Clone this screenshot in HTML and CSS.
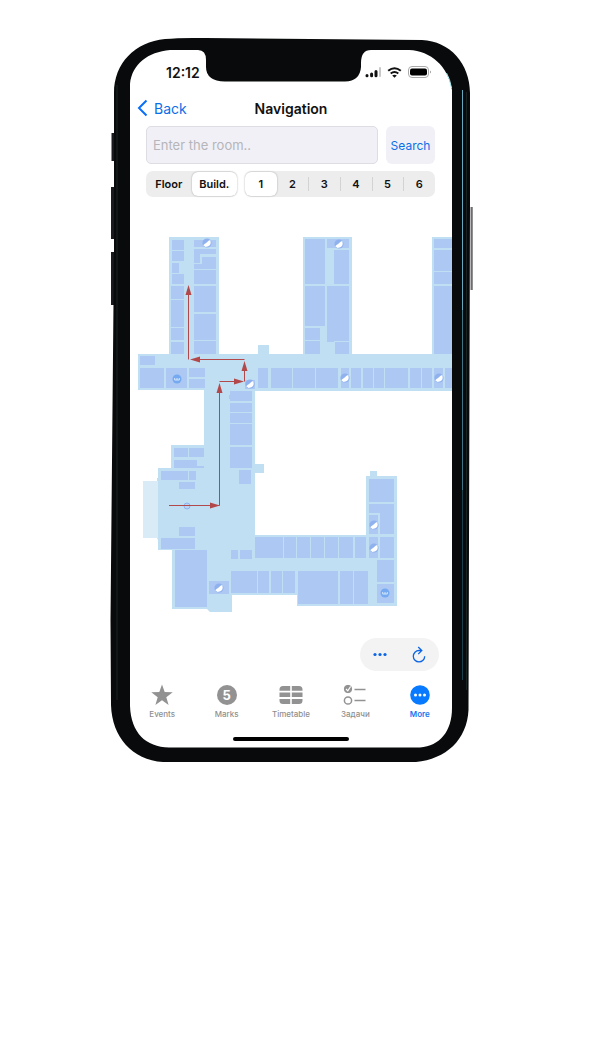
FILE: index.html
```html
<!DOCTYPE html>
<html lang="en">
<head>
<meta charset="utf-8">
<meta name="viewport" content="width=device-width, initial-scale=1">
<title>Navigation</title>
<link rel="stylesheet" href="styles.css">
</head>
<body>
<main class="phone">
  <div class="screen">
    <header>
      <div class="status">
        <time>12:12</time>
        <svg class="status-icons" width="66" height="14" viewBox="365 65 66 14" aria-hidden="true">
          <g stroke-linecap="round" stroke-width="3" stroke="#111"><path d="M367 75.5v.3M371.600 74v1.800M376 71.500v4.300"/><path d="M380 68v8" stroke="#c8c8c8" stroke-width="2"/></g>
          <g fill="none" stroke="#111" stroke-width="2"><path d="M388.200 70.800q6.300-5.200 12.600 0M390.700 73.500q3.800-3 7.600 0"/></g><path d="M392.200 75.500q2.300-1.700 4.600 0l-2.300 2.300z" fill="#111"/>
          <rect x="408.500" y="66.500" width="20" height="11" rx="3.500" fill="#fff" stroke="#aaa"/><rect x="410" y="68.500" width="17" height="7" rx="2" fill="#000"/><path d="M430 70.500q2 1.500 0 3z" fill="#999"/>
        </svg>
      </div>
      <nav class="navbar">
        <a class="back" href="#"><svg width="12" height="18" viewBox="0 0 12 18" aria-hidden="true"><path d="M9.500 1.500 2 9l7.500 7.500" fill="none" stroke="#0a6ff5" stroke-width="2"/></svg>Back</a>
        <h1>Navigation</h1>
      </nav>
    </header>
    <form class="search">
      <input type="text" aria-label="Room" placeholder="Enter the room..">
      <button type="button">Search</button>
    </form>
    <div class="filters">
      <div class="segments modes"><button type="button">Floor</button><button type="button" class="selected">Build.</button></div>
      <div class="segments levels"><button type="button" class="selected">1</button><button type="button">2</button><button type="button">3</button><button type="button">4</button><button type="button">5</button><button type="button">6</button></div>
    </div>
    <svg class="map" viewBox="130 205 322 425" role="img" aria-label="Building plan with route">
      <defs>
        <g id="stairs"><circle r="4.600" fill="#8fb2ef"/><path d="M3.300-3Q5.200 3.500-1.500 3.900L-3.700 2.200-2.500 1-1.300.3 0-.7 1-1.700 2-2.500z" fill="#fff"/></g>
        <g id="wc"><circle r="4.500" fill="#75aaf0"/><path d="M-2.300-1v2h4.600v-2M0-1v2" fill="none" stroke="#d5e7fb" stroke-width="1"/></g>
        <path id="head" d="M0 0l-10-3v6z"/>
      </defs>
      <path fill="#d9ebf6" d="M143 481h17v57h-17z"/>
      <path fill="#c1dff2" d="M138 354h31V237h50v117h39v-9h11v9h34V237h49v117h80V237h20v154H255v73h9v9h-9v62h111v-59h4v-5h7v5h20v130H297v-11h-65v17h-22l-3-3h-35v-59h-14v-10l-1-2h1v-57h-1v-3h1v-10h13v-23h33v-55h-66z"/>
      <g fill="#adc8f3">
        <path d="M172 240h12v10h-12zM172 251h12v10h-12zM172 263h7v10h-7zM172 274h12v10h-12zM171 286h13v13h-13zM171 300h13v27h-13zM171 328h13v12h-13zM171 342h13v12h-13zM194 240h22v7h-22zM194 249h22v5h-16v9h-6zM202 257h14v12h-22v-5h8zM194 270h22v14h-22zM194 286h22v26h-22zM194 314h22v26h-22zM194 341h22v13h-22z"/>
        <path d="M140 356h15v9h-15zM140 368h24v20h-24zM166 368h21v20h-21zM189 368h16v9h-16zM189 379h16v9h-16zM245 380h10v9h-10z"/>
        <path d="M305 239h20v45h-20zM327 239h22v9h-22zM334 250h15v34h-15zM305 286h20v40h-20zM327 286h22v55h-15v1h-7zM305 328h15v12h-15zM305 341h15v13h-15zM335 342h14v12h-14z"/>
        <path d="M434 239h18v9h-18zM434 250h18v21h-18zM434 272h18v12h-18zM434 286h18v68h-18z"/>
        <path d="M258 368h10v20h-10zM271 368h21v20h-21zM293 368h22v20h-22zM316 368h22v20h-22zM341 368h8v20h-8zM351 368h10v20h-10zM363 368h10v20h-10zM374 368h10v20h-10zM385 368h23v20h-23zM410 368h11v20h-11zM422 368h10v20h-10zM434 368h9v20h-9zM445 368h7v20h-7z"/>
        <path d="M230 391h22v10h-22v-2h-1v-4h1zM230 403h22v9h-22zM230 413h22v10h-22zM230 424h22v21h-22zM230 447h22v21h-22zM239 470h12v14h-12zM174 448h14v9h-14zM189 448h15v9h-15zM174 460h23v6h7v2h-30zM161 471h27v9h-27zM189 471h7v9h-7zM179 482h16v7h-16zM179 527h16v9h-16zM161 538h34v11h-34zM175 550h32v57h-32zM209 581h20v13h-20zM231 550h7v9h-7zM240 550h12v9h-12z"/>
        <path d="M255 537h28v21h-28zM284 537h12v21h-12zM297 537h13v21h-13zM311 537h13v21h-13zM325 537h13v21h-13zM339 537h14v21h-14zM355 537h11v21h-11zM369 479h25v23h-25zM369 504h25v30h-14v-21h-11zM369 515h9v19h-9zM369 537h9v21h-9zM380 537h14v21h-14zM377 560h17v22h-17zM377 584h17v19h-17zM231 571h26v22h-26zM258 571h11v22h-11zM271 571h11v22h-11zM283 571h12v22h-12zM298 571h40v33h-40zM340 571h13v33h-13zM354 571h14v33h-14z"/>
      </g>
      <use href="#stairs" x="207" y="243"/><use href="#stairs" x="339" y="244"/><use href="#stairs" x="250" y="384"/><use href="#stairs" x="345" y="378"/><use href="#stairs" x="439" y="378"/><use href="#stairs" x="219" y="588"/><use href="#stairs" x="374" y="525"/><use href="#stairs" x="374" y="548"/>
      <use href="#wc" x="177" y="379"/><use href="#wc" x="385" y="593"/>
      <circle cx="187" cy="506" r="3" fill="#b9d4f5" stroke="#8db3ee"/>
      <path d="M169 505.500h50.500V390M219.500 381.500H237M244.500 381.500V370M244.500 359.500H197M188.500 359.500V292" fill="none" stroke="#b3484a"/>
      <g fill="#b3484a"><use href="#head" transform="translate(220 505.500)"/><use href="#head" transform="translate(219.500 383) rotate(-90)"/><use href="#head" transform="translate(244 381.500)"/><use href="#head" transform="translate(244.500 361) rotate(-90)"/><use href="#head" transform="translate(190 359.500) rotate(180)"/><use href="#head" transform="translate(188.500 285) rotate(-90)"/></g>
    </svg>
    <div class="tools">
      <button type="button" aria-label="Options"><svg width="16" height="16" viewBox="0 0 16 16" fill="#0c66e4"><circle cx="3" cy="7.500" r="1.600"/><circle cx="8" cy="7.500" r="1.600"/><circle cx="13" cy="7.500" r="1.600"/></svg></button>
      <button type="button" aria-label="Reload"><svg width="16" height="18" viewBox="0 0 16 18" fill="none" stroke="#0c66e4" stroke-width="1.300"><path d="M10.500 4.500H8a5.700 5.700 0 1 0 5.700 5.700M7.200 1l3.600 3.500-3.600 3.600"/></svg></button>
    </div>
    <nav class="tabs">
      <a href="#"><svg width="24" height="22" viewBox="0 0 24 22" fill="#929292" aria-hidden="true"><path d="M12 .5l2.700 7.600 8 .2-6.400 4.900 2.300 7.700L12 16.300l-6.600 4.600 2.300-7.700L1.300 8.300l8-.2z"/></svg>Events</a>
      <a href="#"><span class="grade"><b>5</b></span>Marks</a>
      <a href="#"><svg width="24" height="22" viewBox="0 0 24 22" fill="#929292" aria-hidden="true"><path d="M4 2h7.200v4.700H.5V5.500Q.5 2 4 2zM12.800 2H20q3.500 0 3.500 3.500V6.700H12.800zM.5 8.500h10.700v4.500H.5zM12.800 8.500h10.700v4.500H12.800zM.5 15h10.700v5H4q-3.500 0-3.500-3.500zM12.800 15h10.700v1.500Q23.500 20 20 20h-7.200z"/></svg>Timetable</a>
      <a href="#"><svg width="24" height="22" viewBox="0 0 24 22" fill="none" stroke="#929292" aria-hidden="true"><circle cx="5" cy="5" r="3.700" fill="#929292"/><path d="M3 5l1.800 1.800L7.600 2.500" stroke="#fff" stroke-width="1.200"/><circle cx="5" cy="16.500" r="3.600" stroke-width="1.500"/><path d="M11.500 5.500H22.500M11.500 16.500H22.500" stroke-width="1.500"/></svg>Задачи</a>
      <a href="#" class="active" aria-current="page"><svg width="24" height="22" viewBox="0 0 24 22" aria-hidden="true"><circle cx="12" cy="11" r="9.800" fill="#087aff"/><g fill="#fff"><circle cx="7.500" cy="11" r="1.500"/><circle cx="12" cy="11" r="1.500"/><circle cx="16.500" cy="11" r="1.500"/></g></svg>More</a>
    </nav>
    <div class="home"></div>
  </div>
  <svg class="frame" viewBox="110 37 364 726" preserveAspectRatio="none" aria-hidden="true">
    <path d="M470 207h2v83h-2z" fill="#b9b7ba"/><path d="M472 207v83" stroke="#222"/>
    <path d="M114 133h-2.500v28h2.500zM114 187h-3v52h3zM114 252h-3v53h3z" fill="#181a1d"/>
    <path fill="#090a0b" fill-rule="evenodd" d="M165 39Q180 37.500 205 38L422 40C450 41 470 64 470 93V207L468.500 710C467 740 446 759 416 762H163C132 760 112 737 111 705L110.500 620 114 250V93C114 63 135 42 165 39ZM170 50C148 52 132 64 130 84V706C131 733 146 747 169 747.500H420C440 746 452 731 452 708V90C448 66 431 51 409 50H371Q361 50 361 63V67Q360 81 345 81.500H225Q206 81 206 67V60Q206 50 198 50Z"/>
    <path d="M462.500 90V310" stroke="#68a8bf"/><path d="M462.500 310V490" stroke="#3e7484"/><path d="M462.500 490V680" stroke="#1b414c"/>
    <path d="M446.500 73Q450 79 451.500 88" fill="none" stroke="#a8edf3"/>
    <path d="M466.500 92V690M117 85V700" stroke="#1b2224"/>
  </svg>
</main>
</body>
</html>
```
FILE: styles.css
```css
* { box-sizing: border-box; }
body {
  margin: 0;
  padding: 37px 5px 40px 0;
  background: #fff;
  color: #111;
  font-family: Inter, "Liberation Sans", sans-serif;
}
button, input { font: inherit; margin: 0; border: 0; }
button { padding: 0; background: none; color: inherit; }
a { color: inherit; text-decoration: none; }
svg { display: block; flex: none; }
.phone { position: relative; width: 100%; max-width: 364px; margin: 0 auto; padding: 13px 22px 16px 20px; }
.frame { position: absolute; inset: 0; width: 100%; height: 100%; pointer-events: none; }
.screen { display: flex; flex-direction: column; }
.status { display: flex; justify-content: space-between; align-items: center; height: 44px; padding: 0 21px 0 36px; font-size: 14px; font-weight: 600; }
.navbar { display: grid; grid-template-columns: 1fr auto 1fr; align-items: center; height: 28px; padding: 0 7px; }
.back { display: flex; align-items: center; gap: 5px; color: #0a6fe8; font-size: 14px; }
h1 { margin: 0; font-size: 14px; font-weight: 600; }
.search { display: flex; gap: 8px; padding: 4px 17px 0 16px; }
.search input { flex: 1; min-width: 0; height: 38px; padding: 0 6px 1px; border: 1px solid #dddde3; border-radius: 5px; background: #f1f0f6; font-size: 14px; }
.search input::placeholder { color: #b5b5ba; opacity: 1; font-size: 13px; }
.search button { width: 49px; border-radius: 6px; background: #f1f0f6; color: #0a6fe8; font-size: 12px; }
.filters { display: flex; gap: 8px; padding: 7px 17px 0 16px; }
.segments { display: flex; height: 26px; padding: 1px 0; border-radius: 7px; background: #ededee; font-size: 11px; font-weight: 600; }
.segments button { flex: 1; border-radius: 6px; }
.segments .selected { background: #fff; box-shadow: 0 0 2px #0005; }
.modes { flex: 91; }
.levels { flex: 190; }
.levels button:nth-child(n+3) { border-radius: 0; background: linear-gradient(#d3d3d6, #d3d3d6) left center / 1px 14px no-repeat; }
.levels button { min-width: 0; }
.map { width: 100%; height: auto; margin-top: 8px; }
.tools { display: flex; align-self: flex-end; width: 79px; height: 33px; margin: 8px 13px 0 0; border-radius: 17px; background: #f3f3f4; }
.tools button { flex: 1; display: grid; place-items: center; }
.tabs { display: flex; padding-top: 13px; color: #8f8f8f; }
.tabs a { flex: 1; display: flex; flex-direction: column; align-items: center; gap: 3px; font-size: 8px; font-weight: 500; line-height: 10px; }
.tabs .active { color: #1677f2; font-weight: 600; }
.grade { display: grid; place-items: center; width: 20px; height: 20px; margin: 1px; border-radius: 50%; background: #929292; color: #fff; font-size: 13px; }
.home { align-self: center; width: 36%; height: 4px; margin: 18px 0 6px; border-radius: 2px; background: #000; }
```
